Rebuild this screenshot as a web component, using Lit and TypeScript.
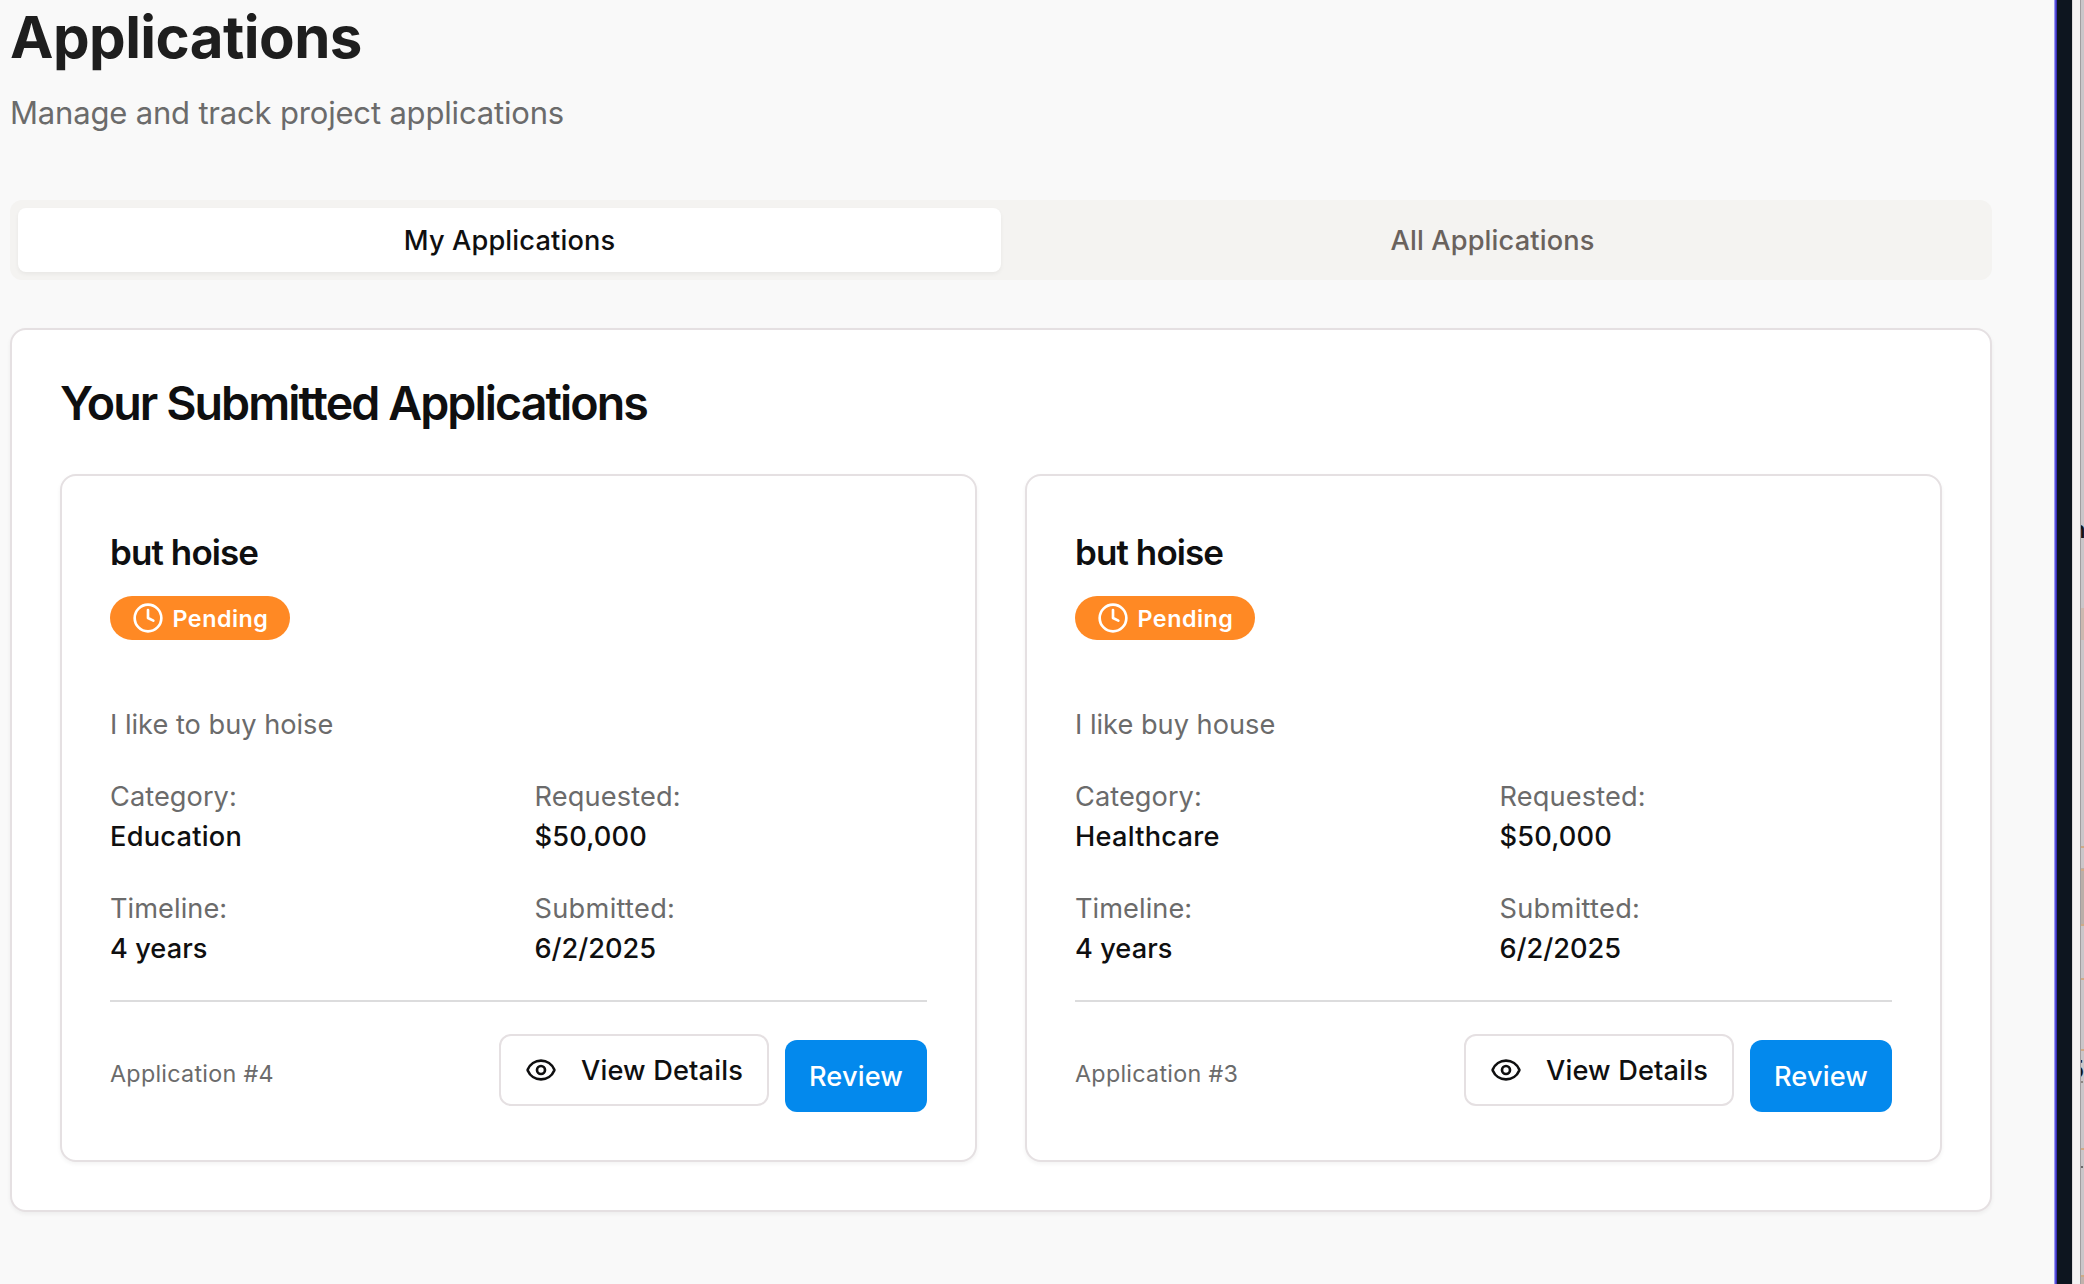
import { LitElement, html, css, svg } from "lit";
import { customElement, property, state } from "lit/decorators.js";

interface Application {
  id: number;
  title: string;
  summary: string;
  category: string;
  requested: string;
  timeline: string;
  submitted: string;
}

const APPLICATIONS: Application[] = [
  {
    id: 4,
    title: "but hoise",
    summary: "I like to buy hoise",
    category: "Education",
    requested: "$50,000",
    timeline: "4 years",
    submitted: "6/2/2025",
  },
  {
    id: 3,
    title: "but hoise",
    summary: "I like buy house",
    category: "Healthcare",
    requested: "$50,000",
    timeline: "4 years",
    submitted: "6/2/2025",
  },
];

const clockIcon = svg`<circle cx="12" cy="12" r="10"></circle><polyline points="12 6 12 12 16 14"></polyline>`;
const eyeIcon = svg`<path d="M2.062 12.348a1 1 0 0 1 0-.696 10.75 10.75 0 0 1 19.876 0 1 1 0 0 1 0 .696 10.75 10.75 0 0 1-19.876 0"></path><circle cx="12" cy="12" r="3"></circle>`;

@customElement("application-card")
export class ApplicationCard extends LitElement {
  @property({ attribute: false }) application!: Application;

  static styles = css`
    :host {
      display: block;
      box-sizing: border-box;
      padding: 48px;
      border: 2px solid #e5e0e2;
      border-radius: 16px;
      background: #fff;
      box-shadow: 0 2px 4px rgba(0, 0, 0, 0.05);
      color: #0f0f10;
      font-size: 27.2px;
      line-height: 40px;
      letter-spacing: 0.05px;
    }
    .title {
      margin: 0 0 16px;
      font-size: 35px;
      line-height: 56px;
      font-weight: 600;
      letter-spacing: -0.9px;
    }
    .badge {
      display: inline-flex;
      align-items: center;
      gap: 8px;
      box-sizing: border-box;
      width: 180px;
      height: 44px;
      padding: 0 22px;
      border-radius: 22px;
      background: #ff8924;
      color: #fff;
      font-size: 23.3px;
      font-weight: 600;
      letter-spacing: 0.5px;
      vertical-align: top;
    }
    .badge-text {
      padding: 2px 0 0 0.5px;
    }
    .icon {
      flex: none;
      width: 32px;
      height: 32px;
      fill: none;
      stroke: currentColor;
      stroke-width: 2;
      stroke-linecap: round;
      stroke-linejoin: round;
    }
    .summary {
      margin: 65px 0 32px;
      color: #6b6b6b;
      letter-spacing: 0;
    }
    .facts {
      display: grid;
      grid-template-columns: 1fr 1fr;
      gap: 32px;
      margin: 0 0 31px;
    }
    .label {
      color: #6b6b6b;
    }
    .value {
      margin: 0;
      font-weight: 500;
    }
    .label.requested {
      letter-spacing: 0.15px;
    }
    .label.submitted {
      letter-spacing: 0.3px;
    }
    .value.word {
      letter-spacing: 0.25px;
    }
    .value.amount {
      letter-spacing: 0.15px;
    }
    .value.date {
      letter-spacing: -0.05px;
    }
    .footer {
      display: flex;
      align-items: center;
      justify-content: space-between;
      border-top: 2px solid #dcdcdd;
      padding-top: 32px;
    }
    .number {
      padding-top: 2px;
      font-size: 23.3px;
      color: #6b6b6b;
      letter-spacing: 0.28px;
    }
    .actions {
      display: flex;
      gap: 16px;
      height: 78px;
    }
    .button {
      display: flex;
      align-items: center;
      box-sizing: border-box;
      height: 72px;
      margin: 0;
      border-radius: 12px;
      font: inherit;
      font-weight: 500;
      letter-spacing: 0.15px;
      white-space: nowrap;
    }
    .button-text {
      padding-top: 2px;
    }
    .view {
      width: 270px;
      gap: 24px;
      padding: 0 24px;
      border: 2px solid #e5e0e2;
      background: #fff;
      color: #0f0f10;
    }
    .review {
      align-self: flex-end;
      justify-content: center;
      width: 142px;
      padding: 0;
      border: 0;
      background: #0389ed;
      color: #fff;
    }
  `;

  render() {
    const a = this.application;
    return html`
      <h3 class="title">${a.title}</h3>
      <span class="badge"><svg class="icon" viewBox="0 0 24 24">${clockIcon}</svg><span class="badge-text">Pending</span></span>
      <div class="summary">${a.summary}</div>
      <div class="facts">
        <div><div class="label">Category:</div><div class="value word">${a.category}</div></div>
        <div><div class="label requested">Requested:</div><div class="value amount">${a.requested}</div></div>
        <div><div class="label">Timeline:</div><div class="value">${a.timeline}</div></div>
        <div><div class="label submitted">Submitted:</div><div class="value date">${a.submitted}</div></div>
      </div>
      <div class="footer">
        <span class="number">Application #${a.id}</span>
        <div class="actions">
          <button class="button view"><svg class="icon" viewBox="0 0 24 24">${eyeIcon}</svg><span class="button-text">View Details</span></button>
          <button class="button review"><span class="button-text">Review</span></button>
        </div>
      </div>
    `;
  }
}

@customElement("window-edge")
export class WindowEdge extends LitElement {
  static styles = css`
    :host {
      display: flex;
      width: 30px;
      height: 1284px;
      flex: none;
    }
    .accent {
      width: 3px;
      background: linear-gradient(90deg, #9a9af0 0 1px, #5850dc 1px 2px, #3a30b4 2px 3px);
    }
    .frame {
      width: 15px;
      background: #0d151f;
    }
    .gutter {
      box-sizing: border-box;
      width: 8px;
      border-left: 1px solid #dedcde;
      background: #f4f3f4;
    }
    .behind {
      position: relative;
      box-sizing: border-box;
      width: 4px;
      overflow: hidden;
      border-left: 1px solid #a29ea0;
      background: #cbc6c9;
    }
    .mark {
      position: absolute;
      left: -1px;
      width: 4px;
      height: 2px;
      background: #d0ab88;
    }
    .tint1 { top: 608px; height: 32px; background: #cdb9b0; }
    .tint2 { top: 868px; height: 56px; background: #bbafa9; }
    .tint3 { top: 1277px; height: 7px; background: #c2b2ac; }
    .r1 { top: 846px; }
    .r2 { top: 869px; }
    .r3 { top: 924px; }
    .r4 { top: 978px; }
    .r5 { top: 1049px; }
    .r6 { top: 1148px; }
    .r7 { top: 1275px; }
    .dash1 { top: 1081px; width: 3px; background: #8e8783; }
    .dash2 { top: 1166px; width: 3px; background: #6b686a; }
    .dash3 { top: 1176px; width: 1px; background: #555; }
    .glyph {
      position: absolute;
      color: #151515;
      font-size: 24px;
      line-height: 24px;
      font-weight: 600;
    }
    .letter { left: -10px; top: 518px; }
    .digit { left: -12px; top: 1058px; }
  `;

  render() {
    return html`
      <div class="accent"></div>
      <div class="frame"></div>
      <div class="gutter"></div>
      <div class="behind">
        ${["tint1", "tint2", "tint3", "r1", "r2", "r3", "r4", "r5", "r6", "r7", "dash1", "dash2", "dash3"].map(
          (name) => html`<div class="mark ${name}"></div>`,
        )}
        <span class="glyph letter">n</span>
        <span class="glyph digit">5</span>
      </div>
    `;
  }
}

@customElement("app-root")
export class AppRoot extends LitElement {
  @state() private tab = 0;

  static styles = css`
    :host {
      display: flex;
      width: 2084px;
      height: 1284px;
      overflow: hidden;
      background: #f9f9f9;
      font-family: Inter, "Liberation Sans", sans-serif;
      color: #0f0f10;
    }
    .page {
      flex: 1;
      box-sizing: border-box;
      padding: 1px 62px 0 10px;
    }
    .heading {
      margin: 0 0 16px;
      color: #1e1e1e;
      font-size: 58.2px;
      line-height: 72px;
      font-weight: 700;
      letter-spacing: -0.55px;
    }
    .lead {
      margin: 0 0 63px;
      color: #6b6b6b;
      font-size: 31px;
      line-height: 48px;
      letter-spacing: -0.18px;
    }
    .tabs {
      display: grid;
      grid-template-columns: 1fr 1fr;
      box-sizing: border-box;
      height: 80px;
      padding: 8px;
      margin-bottom: 48px;
      border-radius: 12px;
      background: #f4f3f1;
    }
    .tab {
      margin: 0;
      padding: 0;
      border: 0;
      border-radius: 8px;
      background: transparent;
      color: #6a625d;
      font: inherit;
      font-size: 27.2px;
      font-weight: 500;
      letter-spacing: 0.14px;
    }
    .tab.active {
      background: #fff;
      color: #0f0f10;
      box-shadow: 0 2px 4px rgba(0, 0, 0, 0.05);
    }
    .panel {
      padding: 48px;
      border: 2px solid #e5e0e2;
      border-radius: 16px;
      background: #fff;
      box-shadow: 0 2px 4px rgba(0, 0, 0, 0.05);
    }
    .panel-title {
      margin: 0 0 46px;
      font-size: 46.6px;
      line-height: 50px;
      font-weight: 600;
      letter-spacing: -1.93px;
    }
    .cards {
      display: grid;
      grid-template-columns: 1fr 1fr;
      gap: 48px;
    }
  `;

  render() {
    return html`
      <main class="page">
        <h1 class="heading">Applications</h1>
        <p class="lead">Manage and track project applications</p>
        <div class="tabs">
          ${["My Applications", "All Applications"].map(
            (name, i) => html`<button class="tab ${i === this.tab ? "active" : ""}" @click=${() => (this.tab = i)}>${name}</button>`,
          )}
        </div>
        <section class="panel">
          <h2 class="panel-title">Your Submitted Applications</h2>
          <div class="cards">
            ${APPLICATIONS.map((a) => html`<application-card .application=${a}></application-card>`)}
          </div>
        </section>
      </main>
      <window-edge></window-edge>
    `;
  }
}
